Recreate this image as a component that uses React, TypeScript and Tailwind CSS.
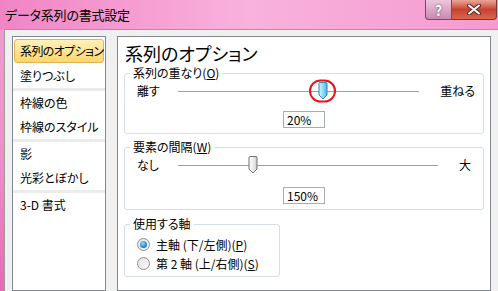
import { ReactNode } from "react"

const jp = "font-['Noto_Sans_CJK_JP',sans-serif] [font-feature-settings:'palt']"

const menu = [
  ["系列のオプション", "塗りつぶし"],
  ["枠線の色", "枠線のスタイル"],
  ["影", "光彩とぼかし"],
  ["3-D 書式"],
]

function GroupBox({ title, className, children }: { title: ReactNode; className: string; children: ReactNode }) {
  return (
    <fieldset className={`rounded-[3px] border border-[#d5dfe5] ${className}`}>
      <legend className="ml-[5px] px-[3px] text-[12px] leading-[16px] text-black">{title}</legend>
      {children}
    </fieldset>
  )
}

function Thumb({ active }: { active?: boolean }) {
  return (
    <svg width="11" height="18" viewBox="0 0 11 18">
      <defs>
        <linearGradient id={active ? "ta" : "tg"} x1="0" x2="1" y1="0" y2="0">
          <stop offset="0" stopColor={active ? "#d6f4ff" : "#ffffff"} />
          <stop offset="0.5" stopColor={active ? "#8fdcf8" : "#ececec"} />
          <stop offset="1" stopColor={active ? "#4cb6e6" : "#cfcfcf"} />
        </linearGradient>
      </defs>
      <path
        d="M1.5 1.5 Q1.5 0.5 2.5 0.5 H8.5 Q9.5 0.5 9.5 1.5 V13 L5.5 17 L1.5 13 Z"
        fill={`url(#${active ? "ta" : "tg"})`}
        stroke={active ? "#2f86b8" : "#707070"}
      />
    </svg>
  )
}

function SliderRow({ left, right, pos, active, pr }: { left: string; right: string; pos: string; active?: boolean; pr: string }) {
  return (
    <div className={`flex h-[20px] items-center pl-[12px] ${pr} text-[12px]`}>
      <span className="w-[41px]">{left}</span>
      <div className="relative h-[1px] flex-1 bg-[#a0a0a0]">
        <div className={`absolute top-[-9px] ${pos} -translate-x-1/2`}>
          <Thumb active={active} />
          {active && (
            <div className="absolute left-1/2 top-1/2 h-[23px] w-[27px] -translate-x-1/2 -translate-y-1/2 rounded-full border-2 border-[#e8141c]" />
          )}
        </div>
      </div>
      <span className="ml-[21px]">{right}</span>
    </div>
  )
}

function ValueBox({ value }: { value: string }) {
  return (
    <div className="flex justify-center">
      <div className="h-[17px] w-[42px] border border-[#a5acb5] bg-white pl-[3px] text-[12px] leading-[15px]">{value}</div>
    </div>
  )
}

function Radio({ checked, children }: { checked?: boolean; children: ReactNode }) {
  return (
    <div className="flex h-[19px] items-center pl-[12px] text-[12px]">
      <span className="flex h-[13px] w-[13px] items-center justify-center rounded-full border border-[#8f8f8f] bg-gradient-to-br from-[#e4e4e4] to-[#f8f8f8]">
        {checked && (
          <span className="h-[7px] w-[7px] rounded-full bg-[radial-gradient(circle_at_40%_35%,#8fe0ff,#2a86d6_60%,#0d4a8c)]" />
        )}
      </span>
      <span className="ml-[6px] whitespace-pre">{children}</span>
    </div>
  )
}

export default function App() {
  return (
    <div className={`flex h-[291px] w-[498px] flex-col overflow-hidden bg-gradient-to-b from-[#f39bd0] via-[#f290cb] to-[#e968b7] text-black ${jp}`}>
      {/* title bar */}
      <div className="flex h-[29px] shrink-0 bg-gradient-to-r from-[#f184c5] via-[#f8b2dc] to-[#f49ad0]">
        <div className="flex-1 pl-[5px] pt-[6px] text-[13px] leading-[17px] tracking-[-0.2px]">データ系列の書式設定</div>
        <div className="mr-[1px] flex h-[20px]">
          <div className="flex w-[27px] items-center justify-center rounded-bl-[4px] border border-t-0 border-[#6b5160] bg-gradient-to-b from-[#ecc6dc] to-[#c98aae] text-[14px] font-bold leading-none text-white [text-shadow:0_0_2px_#4a3040]">
            ?
          </div>
          <div className="flex w-[45px] items-center justify-center rounded-br-[4px] border border-l-0 border-t-0 border-[#6b3a34] bg-gradient-to-b from-[#e9a598] via-[#c8402f] to-[#d9664e]">
            <svg width="14" height="11" viewBox="0 0 14 11">
              <path d="M2 1.5 L12 9.5 M12 1.5 L2 9.5" stroke="#5a2a24" strokeWidth="4" strokeLinecap="round" />
              <path d="M2 1.5 L12 9.5 M12 1.5 L2 9.5" stroke="#ffffff" strokeWidth="2" strokeLinecap="round" />
            </svg>
          </div>
        </div>
      </div>

      {/* dialog body */}
      <div className="ml-[4px] flex flex-1 gap-[11px] border-l border-t border-[#9a9a9a] bg-[#f0f0f0] pl-[7px] pt-[6px]">
        <div className="w-[94px] shrink-0 border border-[#828790] bg-white pt-[1px] text-[12px]">
          {menu.map((group, gi) => (
            <div key={gi}>
              {gi > 0 && <div className="h-[3px] bg-[#ececec]" />}
              {group.map((item) =>
                item === "系列のオプション" ? (
                  <div
                    key={item}
                    className="mx-[1px] my-[1px] flex h-[24px] items-center whitespace-nowrap rounded-[3px] border border-[#e5b44f] bg-gradient-to-b from-[#fff1b8] to-[#fdd66a] pl-[5px] tracking-[-0.6px]"
                  >
                    {item}
                  </div>
                ) : (
                  <div key={item} className="flex h-[24px] items-center whitespace-nowrap pl-[7px]">
                    {item}
                  </div>
                )
              )}
            </div>
          ))}
        </div>

        <div className="w-[374px] shrink-0 border border-[#828790] bg-white px-[6px]">
          <div className="pl-[1px] pt-[6px] text-[18px] leading-[20px]">系列のオプション</div>
          <GroupBox
            className="mt-[2px] pb-[5px]"
            title={
              <>
                系列の重なり(<span className="underline">O</span>)
              </>
            }
          >
            <SliderRow left="離す" right="重ねる" pos="left-[60%]" active pr="pr-[8px]" />
            <div className="mt-[10px]">
              <ValueBox value="20%" />
            </div>
          </GroupBox>
          <GroupBox
            className="mt-[5px] pb-[5px]"
            title={
              <>
                要素の間隔(<span className="underline">W</span>)
              </>
            }
          >
            <SliderRow left="なし" right="大" pos="left-[29%]" pr="pr-[12px]" />
            <div className="mt-[12px]">
              <ValueBox value="150%" />
            </div>
          </GroupBox>
          <GroupBox className="mt-[6px] w-[156px] pb-[3px] pt-[3px]" title="使用する軸">
            <Radio checked>
              主軸 (下/左側)(<span className="underline">P</span>)
            </Radio>
            <Radio>
              第 2 軸 (上/右側)(<span className="underline">S</span>)
            </Radio>
          </GroupBox>
        </div>
      </div>
    </div>
  )
}
